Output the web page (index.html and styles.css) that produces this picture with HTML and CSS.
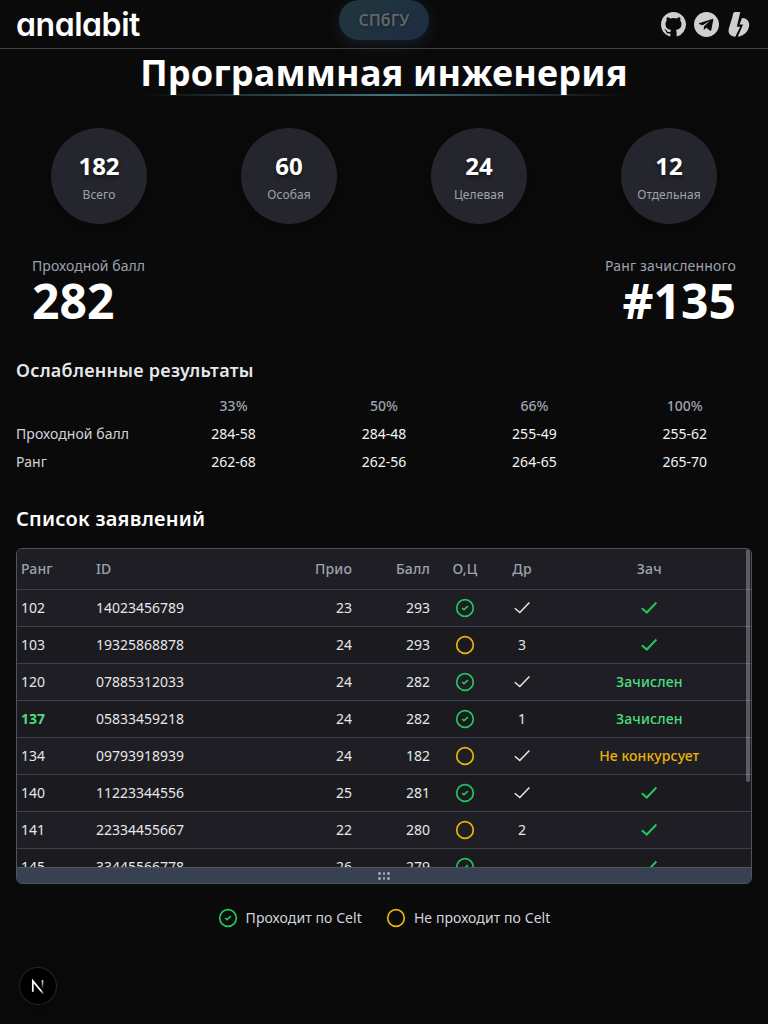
FILE: index.html
```html
<!DOCTYPE html>
<html lang="ru">
<head>
<meta charset="utf-8">
<title>analabit</title>
<link rel="stylesheet" href="styles.css">
</head>
<body>
<svg class="defs" width="0" height="0" aria-hidden="true">
  <symbol id="pass" viewBox="0 0 20 20"><circle cx="10" cy="10" r="8.3" fill="none" stroke="#22c55e" stroke-width="1.7"/><path d="M7.100 10l1.900 1.700 3.900-3.500" fill="none" stroke="#22c55e" stroke-width="1.600"/></symbol>
  <symbol id="fail" viewBox="0 0 20 20"><circle cx="10" cy="10" r="8.3" fill="none" stroke="#eab308" stroke-width="1.7"/></symbol>
  <symbol id="check" viewBox="0 0 20 20"><path d="M2.8 10.2l5 4.300L17.4 4.5" fill="none" stroke="currentColor"/></symbol>
</svg>
<header class="header">
  <div class="logo">analabit</div>
  <div class="badge">СПбГУ</div>
  <nav class="socials">
    <svg width="25" height="25" viewBox="0 0 24 24"><path fill="currentColor" d="M12 0C5.37 0 0 5.37 0 12c0 5.3 3.44 9.8 8.21 11.39.6.11.79-.26.79-.58v-2.23c-3.34.73-4.03-1.42-4.03-1.42-.55-1.39-1.33-1.76-1.33-1.76-1.09-.74.08-.73.08-.73 1.2.09 1.84 1.24 1.84 1.24 1.07 1.83 2.81 1.3 3.49 1 .11-.78.42-1.31.76-1.61-2.66-.3-5.47-1.33-5.47-5.93 0-1.31.47-2.38 1.24-3.22-.14-.3-.54-1.52.1-3.18 0 0 1.01-.32 3.3 1.23a11.5 11.5 0 0 1 6.02 0c2.28-1.55 3.29-1.23 3.29-1.23.64 1.66.24 2.88.12 3.18.77.84 1.23 1.91 1.23 3.22 0 4.61-2.81 5.62-5.48 5.92.42.36.81 1.1.81 2.22v3.29c0 .32.19.69.8.58A12 12 0 0 0 24 12c0-6.63-5.37-12-12-12z"/></svg>
    <svg width="25" height="25" viewBox="0 0 24 24"><path fill="currentColor" fill-rule="evenodd" d="M12 0a12 12 0 1 0 0 24 12 12 0 0 0 0-24zM17.600 6.600c.6-.2 1 .1.900.8l-1.900 10c-.1.700-.6.900-1.200.5l-3.600-2.900-1.900 1.800c-.4.300-.6.200-.6-.3l.3-2.900 5.600-5.200-6.900 4.400-3-1.100c-.7-.3-.7-.8.100-1.100z"/></svg>
    <svg width="25" height="25" viewBox="0 0 25 25"><path fill="currentColor" d="M8.300 0h5L9.800 14.700h3.400L8.300 24.800C3.500 24.500 1 21.500 1.700 17.300 2.500 13 5 8 6 2 6.300.7 7 0 8.300 0zM15 6C19.500 6 22.200 9 22.200 12.500c0 6-4.500 11.500-11.400 12.200L16 12.600h-3.500z"/></svg>
  </nav>
</header>
<main class="main">
  <div class="title-row"><h1 class="title">Программная инженерия</h1></div>
  <section class="stats">
    <div class="stat"><b>182</b><span>Всего</span></div>
    <div class="stat"><b>60</b><span>Особая</span></div>
    <div class="stat"><b>24</b><span>Целевая</span></div>
    <div class="stat"><b>12</b><span>Отдельная</span></div>
  </section>
  <section class="scores">
    <div><p class="score-label">Проходной балл</p><p class="score">282</p></div>
    <div class="right"><p class="score-label wide">Ранг зачисленного</p><p class="score">#135</p></div>
  </section>
  <h2 class="subtitle">Ослабленные результаты</h2>
  <div class="results">
    <span></span><span class="pct">33%</span><span class="pct">50%</span><span class="pct">66%</span><span class="pct">100%</span>
    <span class="name">Проходной балл</span><span>284-58</span><span>284-48</span><span>255-49</span><span>255-62</span>
    <span class="name">Ранг</span><span>262-68</span><span>262-56</span><span>264-65</span><span>265-70</span>
  </div>
  <h2 class="list-title">Список заявлений</h2>
  <div class="panel">
    <div class="rows">
      <div class="row head"><span>Ранг</span><span>ID</span><span>Прио</span><span>Балл</span><span>О,Ц</span><span>Др</span><span>Зач</span></div>
      <div class="row"><span>102</span><span>14023456789</span><span>23</span><span>293</span><span><svg class="status"><use href="#pass"/></svg></span><span><svg class="check"><use href="#check"/></svg></span><span><svg class="check ok"><use href="#check"/></svg></span></div>
      <div class="row"><span>103</span><span>19325868878</span><span>24</span><span>293</span><span><svg class="status"><use href="#fail"/></svg></span><span>3</span><span><svg class="check ok"><use href="#check"/></svg></span></div>
      <div class="row"><span>120</span><span>07885312033</span><span>24</span><span>282</span><span><svg class="status"><use href="#pass"/></svg></span><span><svg class="check"><use href="#check"/></svg></span><span class="admitted">Зачислен</span></div>
      <div class="row"><span class="current">137</span><span>05833459218</span><span>24</span><span>282</span><span><svg class="status"><use href="#pass"/></svg></span><span>1</span><span class="admitted">Зачислен</span></div>
      <div class="row"><span>134</span><span>09793918939</span><span>24</span><span>182</span><span><svg class="status"><use href="#fail"/></svg></span><span><svg class="check"><use href="#check"/></svg></span><span class="out">Не конкурсует</span></div>
      <div class="row"><span>140</span><span>11223344556</span><span>25</span><span>281</span><span><svg class="status"><use href="#pass"/></svg></span><span><svg class="check"><use href="#check"/></svg></span><span><svg class="check ok"><use href="#check"/></svg></span></div>
      <div class="row"><span>141</span><span>22334455667</span><span>22</span><span>280</span><span><svg class="status"><use href="#fail"/></svg></span><span>2</span><span><svg class="check ok"><use href="#check"/></svg></span></div>
      <div class="row"><span>145</span><span>33445566778</span><span>26</span><span>279</span><span><svg class="status"><use href="#pass"/></svg></span><span></span><span><svg class="check ok"><use href="#check"/></svg></span></div>
    </div>
    <div class="thumb"></div>
    <div class="grip"><i></i><i></i><i></i><i></i><i></i><i></i></div>
  </div>
  <div class="legend">
    <div><svg class="status"><use href="#pass"/></svg><span>Проходит по Celt</span></div>
    <div><svg class="status"><use href="#fail"/></svg><span>Не проходит по Celt</span></div>
  </div>
</main>
<div class="dev">
  <svg width="36" height="36" viewBox="0 0 36 36">
    <defs><linearGradient id="diag" x1="18" y1="18" x2="24" y2="26" gradientUnits="userSpaceOnUse"><stop offset=".5" stop-color="#fff"/><stop offset="1" stop-color="#fff" stop-opacity=".2"/></linearGradient>
    <linearGradient id="stem" x1="0" y1="12" x2="0" y2="21" gradientUnits="userSpaceOnUse"><stop stop-color="#fff"/><stop offset="1" stop-color="#fff" stop-opacity="0"/></linearGradient></defs>
    <path d="M12.800 23.800V12.900L23.200 25.500" fill="none" stroke="url(#diag)" stroke-width="1.700"/>
    <path d="M22.500 12.200v9" stroke="url(#stem)" stroke-width="1.600"/>
  </svg>
</div>
</body>
</html>
```
FILE: styles.css
```css
* { box-sizing: border-box; }
body { margin: 0; height: 1024px; overflow: hidden; background: #0a0a0a; color: #fff; font-family: "Noto Sans", sans-serif; font-size: 14px; line-height: 20px; }
h1, h2, p { margin: 0; }
.defs { position: absolute; }
.header { display: grid; grid-template-columns: 1fr auto 1fr; align-items: center; height: 49px; padding: 0 16px; border-bottom: 1px solid #414141; }
.logo { padding-top: 1px; font: 600 32px/48px Inter, sans-serif; font-feature-settings: "cv11"; letter-spacing: -0.45px; }
.badge { align-self: start; width: 90px; height: 40px; border-radius: 20px; background: linear-gradient(135deg, #21373f, #1e2c40); box-shadow: 0 4px 15px rgba(40, 65, 90, .4); color: #626669; font-size: 16px; font-weight: 600; line-height: 41px; text-align: center; text-shadow: 0 1px 3px rgba(0, 0, 0, .4); }
.socials { display: flex; justify-content: flex-end; gap: 8px; color: #cfcfcf; }
.main { padding: 0 16px; }
.title-row { display: flex; justify-content: center; }
.title { height: 47px; font-size: 36px; font-weight: 700; line-height: 48px; letter-spacing: .2px; background: linear-gradient(90deg, transparent, #42727e, transparent) bottom / 100% 2px no-repeat; white-space: nowrap; }
.stats { display: grid; grid-template-columns: repeat(4, 1fr); column-gap: 24px; margin-top: 32px; justify-items: center; }
.stat { display: flex; flex-direction: column; align-items: center; width: 96px; height: 96px; padding-top: 22px; border-radius: 50%; background: #25252d; box-shadow: 0 4px 20px rgba(0, 0, 0, .3); }
.stat b { font-size: 24px; line-height: 32px; text-shadow: 0 2px 4px rgba(0, 0, 0, .5); }
.stat span { margin-top: 5px; color: #9ca3af; font-size: 12px; line-height: 16px; letter-spacing: .1px; }
.scores { display: flex; justify-content: space-between; margin-top: 32px; padding: 0 16px; }
.right { text-align: right; }
.score-label { color: #9ca3af; letter-spacing: .07px; }
.score-label.wide { letter-spacing: .15px; }
.score { padding-top: 1px; font-size: 48px; font-weight: 700; line-height: 48px; }
.subtitle { margin-top: 31px; color: #e5e7eb; font-size: 18px; font-weight: 600; line-height: 28px; letter-spacing: .27px; }
.results { display: grid; grid-template-columns: repeat(5, 1fr); gap: 8px 16px; margin-top: 12px; text-align: center; color: #f3f4f6; }
.results .name { text-align: left; color: #d1d5db; white-space: nowrap; letter-spacing: .07px; }
.results .pct { color: #9ca3af; font-weight: 500; }
.list-title { margin-top: 33px; font-size: 20px; font-weight: 600; line-height: 28px; letter-spacing: .24px; }
.panel { position: relative; display: flex; flex-direction: column; height: 336px; margin-top: 15px; border: 1px solid #4b5563; border-radius: 6px; overflow: hidden; background: #1e1e24; }
.rows { flex: 1; overflow: hidden; color: #e5e7eb; }
.row { display: grid; grid-template-columns: 75px 180px 84px 78px 62px 52px 202.5px; height: 37px; align-items: center; border-bottom: 1px solid #374151; background: #1e1e24; white-space: nowrap; }
.row:nth-child(odd) { background: #1a1a1f; }
.row > span { display: flex; align-items: center; justify-content: center; }
.row > span:nth-child(-n+2) { justify-content: flex-start; padding-left: 4px; }
.row > span:nth-child(3), .row > span:nth-child(4) { justify-content: flex-end; padding-right: 4px; }
.row.head { height: 41px; color: #9ca3af; background: #1e1e24; font-weight: 500; letter-spacing: .15px; }
.row .current { color: #4ade80; font-weight: 700; }
.row .admitted { color: #4ade80; font-weight: 500; letter-spacing: .15px; }
.row .out { color: #eab308; font-weight: 500; letter-spacing: .1px; }
.status { display: block; width: 20px; height: 20px; }
.check { display: block; width: 20px; height: 20px; stroke-width: 1.5; }
.check.ok { color: #22c55e; stroke-width: 2; }
.thumb { position: absolute; top: 0; right: 1px; width: 4px; height: 233px; border-radius: 2px; background: rgba(255, 255, 255, .28); }
.grip { display: grid; grid-template-columns: repeat(3, 2.6px); gap: 2px; place-content: center; height: 16px; padding-top: 1px; border-top: 1px solid #4b5563; background: #374151; }
.grip i { width: 2.6px; height: 2.6px; border-radius: 50%; background: #9ca3af; }
.legend { display: flex; justify-content: center; gap: 24px; margin-top: 24px; color: #d1d5db; letter-spacing: .08px; }
.legend div { display: flex; align-items: center; gap: 8px; }
.dev { position: fixed; left: 20px; bottom: 20px; width: 36px; height: 36px; border-radius: 50%; background: #000; box-shadow: 0 0 0 1px #262626, 0 16px 32px rgba(0, 0, 0, .24); }
```
